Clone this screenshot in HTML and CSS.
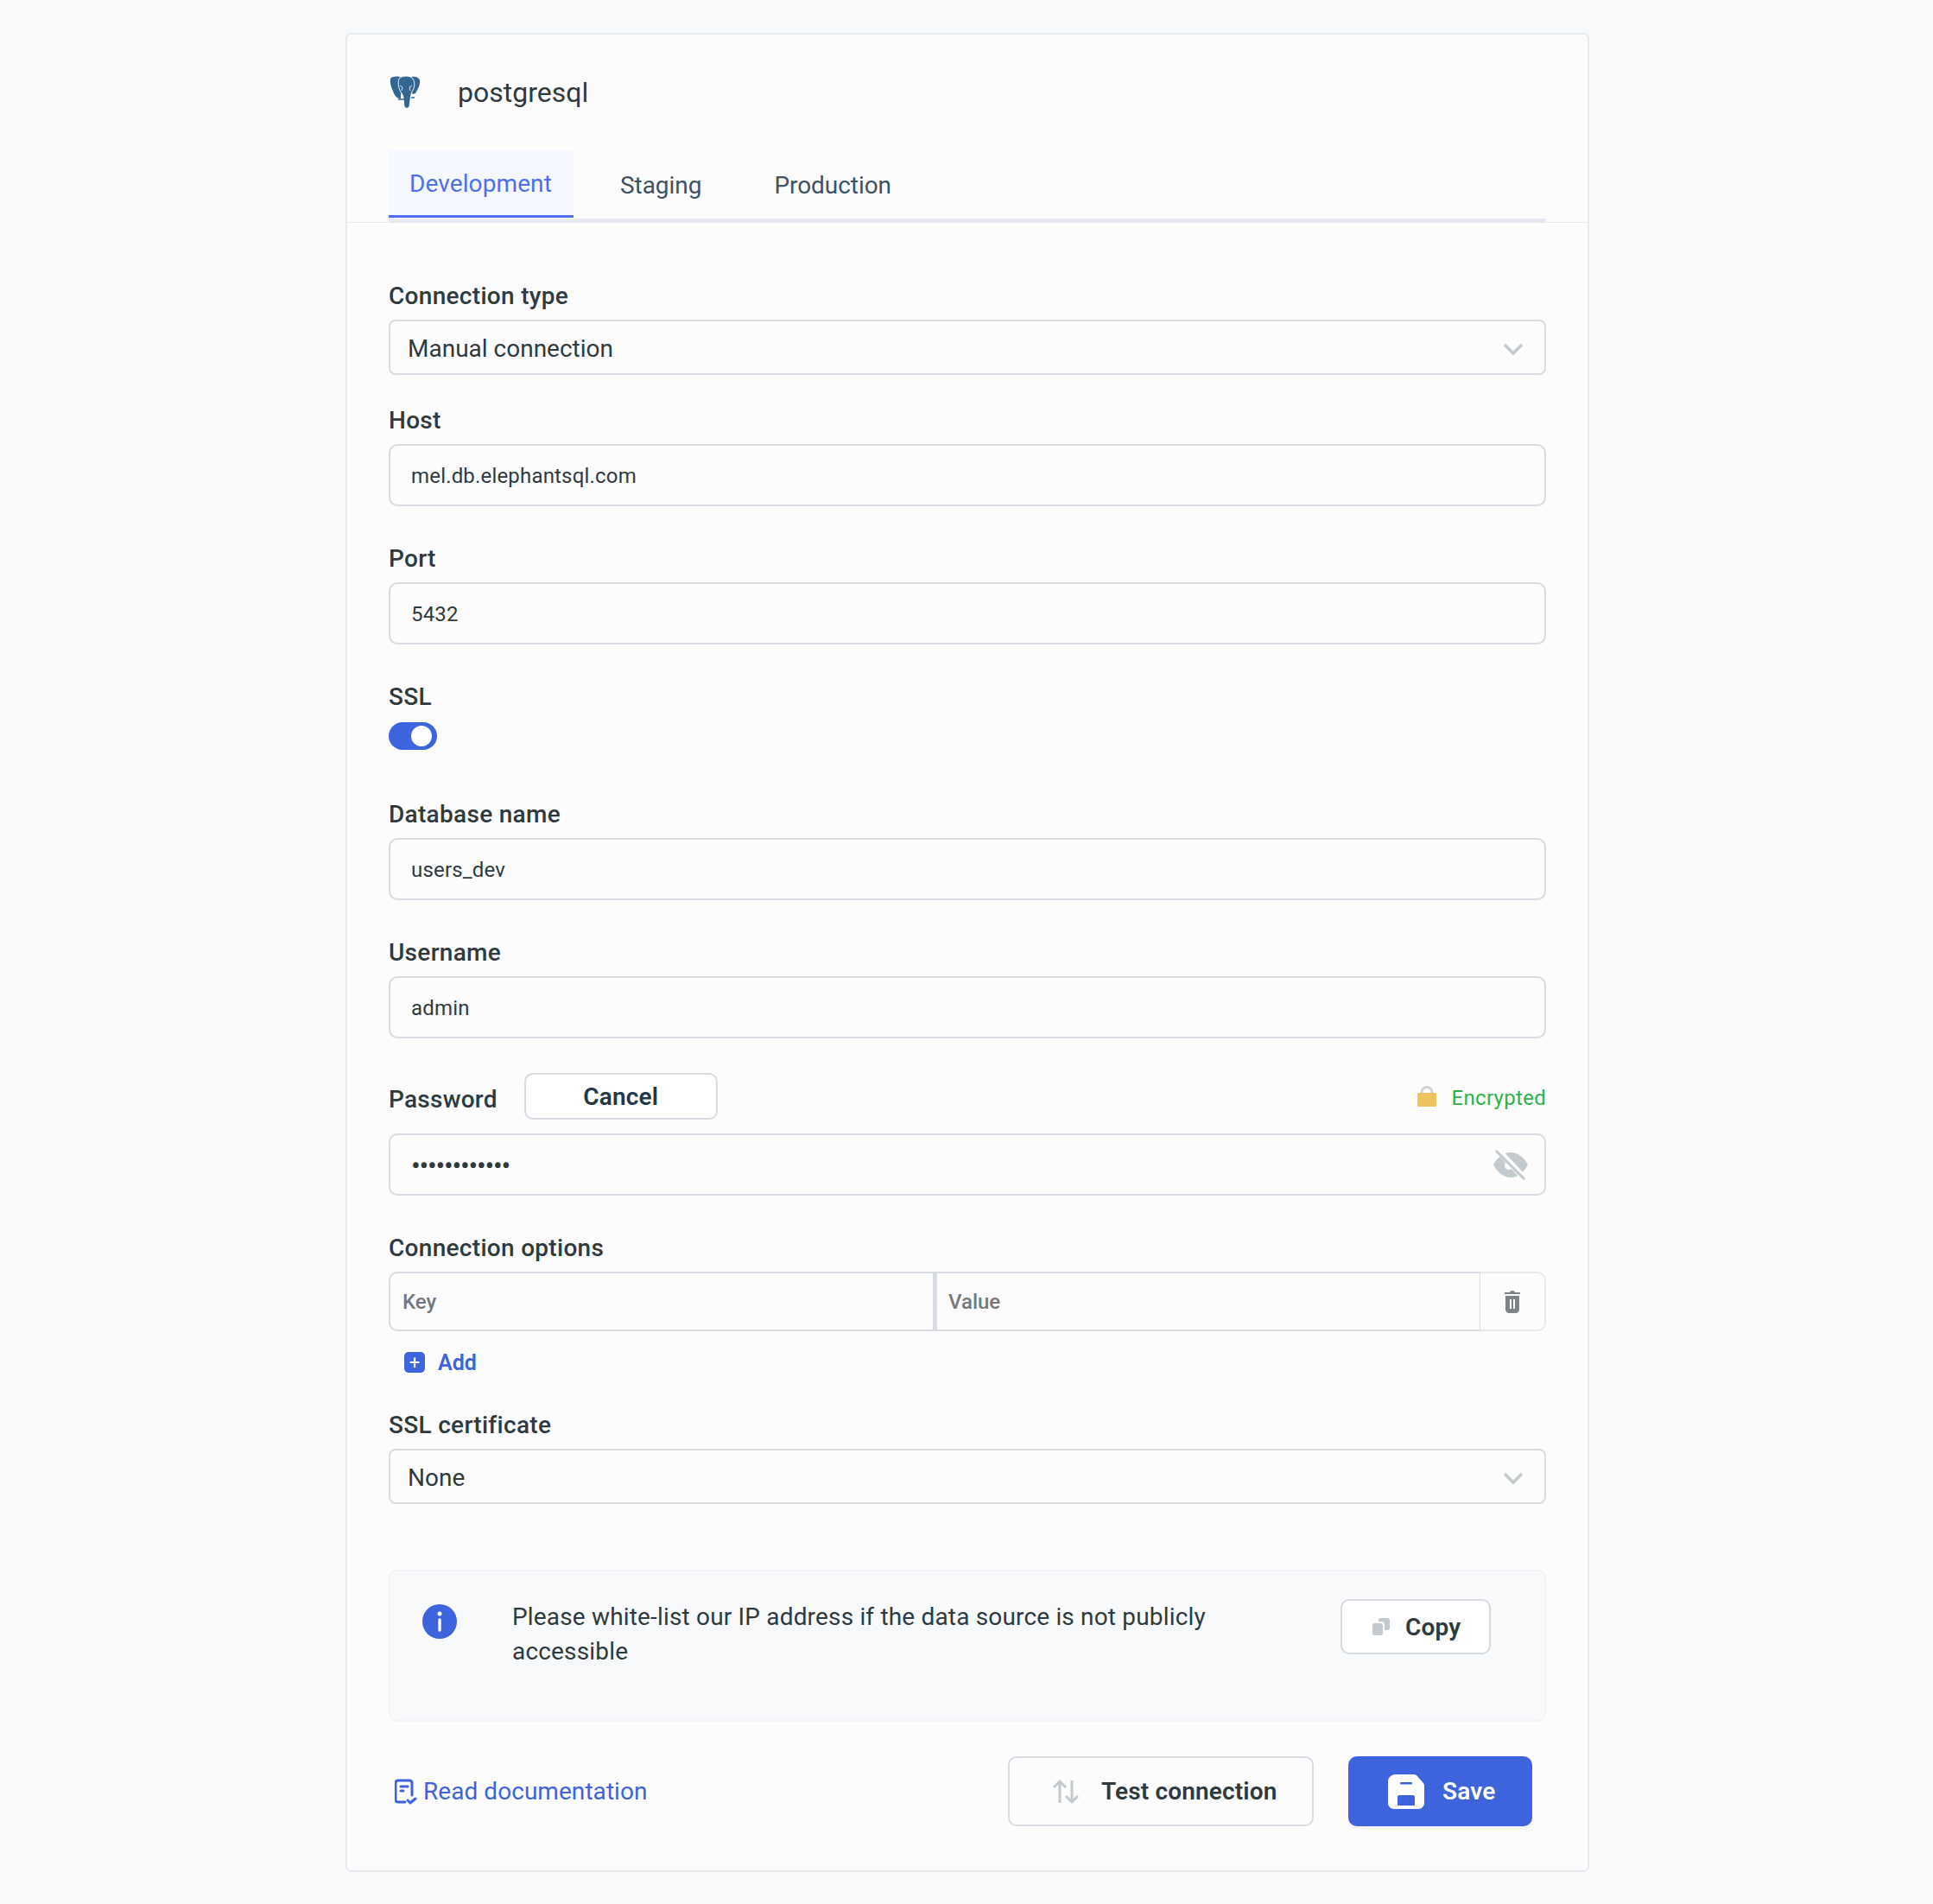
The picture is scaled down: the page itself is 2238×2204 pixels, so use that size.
FILE: index.html
```html
<!doctype html>
<html lang="en">
<head>
    <meta charset="UTF-8">
    <title>postgresql connection</title>
    <link rel="stylesheet" href="styles.css">
</head>
<body>
    <div class="card">
        <div class="card-head">
            <div class="source">
                <svg class="source-logo" viewBox="0 0 36 38">
                    <path fill="#336791" d="M1 3C4 0 10 0 14 2L13 26C9 26 7 24 5 20 3 15 0 9 1 3z"/>
                    <path fill="#336791" d="M25 1C29 0 34 1 35 5 36 9 33 15 30 20 29 21 27 21 25 20z"/>
                    <path fill="#336791" stroke="#fff" stroke-width="0.9" d="M11 3C15-1 23-1 27 3 30 8 29 14 26 18 24 22 24 30 23 35 22 38 18 38 17 35 16 30 17 24 14 20 11 16 9 9 11 3z"/>
                    <path fill="none" stroke="#fff" stroke-width="0.8" d="M12 11l3 2-1 4M26 11l-3 2 1 4"/>
                    <path fill="none" stroke="#336791" stroke-width="1.6" d="M10 27h7M25 25h4"/>
                </svg>
                <span class="source-name">postgresql</span>
            </div>
            <div class="tabs">
                <div class="tab tab-active">Development</div>
                <div class="tab">Staging</div>
                <div class="tab">Production</div>
            </div>
        </div>

        <div class="card-body">
            <div class="label label-first">Connection type</div>
            <div class="select">
                <span>Manual connection</span>
                <svg class="chevron" viewBox="0 0 24 14"><path d="M2 2l10 10L22 2"/></svg>
            </div>

            <div class="label label-host">Host</div>
            <div class="input">mel.db.elephantsql.com</div>

            <div class="label">Port</div>
            <div class="input">5432</div>

            <div class="label label-ssl">SSL</div>
            <div class="toggle"><span class="toggle-knob"></span></div>

            <div class="label label-db">Database name</div>
            <div class="input">users_dev</div>

            <div class="label">Username</div>
            <div class="input">admin</div>

            <div class="password-head">
                <span class="label-inline">Password</span>
                <button class="btn-cancel">Cancel</button>
                <span class="encrypted">
                    <svg class="lock" viewBox="0 0 22 24">
                        <path fill="none" stroke="#cfd3d6" stroke-width="3" d="M5 10V7a6 5.5 0 0 1 12 0v3"/>
                        <rect y="8" width="22" height="16" rx="1" fill="#eec35f"/>
                    </svg>
                    <span class="encrypted-text">Encrypted</span>
                </span>
            </div>
            <div class="input input-password">
                <span class="dots">••••••••••••</span>
                <svg class="eye" viewBox="0 0 40 35">
                    <path fill="#c3cacd" d="M20 3c9 0 16 7 20 14-4 8-11 15-20 15S4 25 0 17C4 10 11 3 20 3z"/>
                    <circle cx="18" cy="18" r="5" fill="#fcfcfd"/>
                    <path stroke="#fcfcfd" stroke-width="7" d="M5 0l33 35"/>
                    <path stroke="#c3cacd" stroke-width="3" d="M3 1l33 33"/>
                </svg>
            </div>

            <div class="label">Connection options</div>
            <div class="options">
                <div class="option-key">Key</div>
                <div class="option-value">Value</div>
                <div class="option-remove">
                    <svg viewBox="0 0 20 26" class="trash">
                        <path fill="#7d8488" d="M7 2c0-1 1-2 3-2s3 1 3 2h6v2H1V2zM2 6h16v16c0 2-2 4-4 4H6c-2 0-4-2-4-4z"/>
                        <path stroke="#fcfcfd" stroke-width="2" d="M8 10v11M12 10v11"/>
                    </svg>
                </div>
            </div>
            <div class="add">
                <span class="add-icon">+</span>
                <span>Add</span>
            </div>

            <div class="label label-cert">SSL certificate</div>
            <div class="select">
                <span>None</span>
                <svg class="chevron" viewBox="0 0 24 14"><path d="M2 2l10 10L22 2"/></svg>
            </div>

            <div class="notice">
                <span class="notice-icon">
                    <svg viewBox="0 0 40 40">
                        <circle cx="20" cy="20" r="20" fill="#3d63dd"/>
                        <circle cx="20" cy="11" r="2.5" fill="#fff"/>
                        <path stroke="#fff" stroke-width="3.4" stroke-linecap="round" d="M20 18v12"/>
                    </svg>
                </span>
                <p class="notice-text">Please white-list our IP address if the data source is not publicly accessible</p>
                <button class="btn btn-copy">
                    <svg class="copy-icon" viewBox="0 0 20 20">
                        <rect x="7" y="0" width="13" height="14" rx="3" fill="#c3cacd"/>
                        <rect x="0" y="4" width="14" height="16" rx="4" fill="#fcfcfd"/>
                        <rect x="0" y="6" width="12" height="14" rx="3" fill="#c3cacd"/>
                    </svg>
                    Copy
                </button>
            </div>

            <div class="footer">
                <a class="doc-link">
                    <svg class="doc-icon" viewBox="0 0 26 30">
                        <path fill="none" stroke="#3d63dd" stroke-width="3" stroke-linecap="round" stroke-linejoin="round" d="M12 27H4c-2 0-3-1-3-3V5c0-2 1-3 3-3h13c2 0 3 1 3 3v14M7 9h8M7 14h3M15 25l3 3 6-5"/>
                    </svg>
                    Read documentation
                </a>
                <div class="footer-actions">
                    <button class="btn btn-test">
                        <svg class="test-icon" viewBox="0 0 32 30">
                            <path fill="none" stroke="#c3cacd" stroke-width="3" d="M9 28V3M2 10l7-7 7 7M23 2v25M16 20l7 7 7-7"/>
                        </svg>
                        Test connection
                    </button>
                    <button class="btn btn-save">
                        <svg class="save-icon" viewBox="0 0 42 40">
                            <path fill="#fff" d="M8 0h22c2 0 3 1 4 2l6 7c1 1 2 2 2 4v20c0 4-3 7-7 7H7c-4 0-7-3-7-7V8c0-4 4-8 8-8z"/>
                            <rect x="14" y="9" width="14" height="2.5" rx="1" fill="#3d63dd"/>
                            <path fill="#3d63dd" d="M11 26c0-1 1-2 2-2h16c1 0 2 1 2 2v10H11z"/>
                        </svg>
                        Save
                    </button>
                </div>
            </div>
        </div>
    </div>
</body>
</html>
```

FILE: styles.css
```css
* {
    box-sizing: border-box;
}
body {
    margin: 0;
    padding: 38px 0 38px 2px;
    background-color: #f8f9fb;
    font-family: 'Roboto', sans-serif;
    color: #2f3a3f;
}
.card {
    width: 1440px;
    margin: 0 auto;
    background-color: #fcfcfd;
    border: 2px solid #e6e9ee;
    border-radius: 6px;
}
.card-head {
    padding: 48px 48px 0;
    border-bottom: 1px solid #e6e9ee;
}
.source {
    display: flex;
    align-items: center;
    height: 38px;
}
.source-logo {
    width: 36px;
    height: 38px;
    margin-left: 1px;
}
.source-name {
    margin-left: 43px;
    font-size: 32px;
    color: #2f3a3f;
}
.tabs {
    display: flex;
    margin-top: 48px;
    height: 83px;
    border-bottom: 4px solid #e6e9ef;
}
.tab {
    padding: 24px 24px 0;
    margin-right: 36px;
    font-size: 28px;
    letter-spacing: -0.05px;
    color: #3f5261;
}
.tab-active {
    width: 214px;
    height: 78px;
    margin-right: 30px;
    padding-top: 22px;
    background-color: #f5f8fe;
    border-bottom: 3px solid #4b6ff0;
    letter-spacing: 0.1px;
    color: #4b6ff0;
}
.card-body {
    padding: 0 48px 51px;
}
.label {
    height: 34px;
    margin-top: 44px;
    margin-bottom: 10px;
    font-size: 28px;
    font-weight: 500;
    line-height: 34px;
    letter-spacing: 0.3px;
    color: #2f3a3f;
}
.label-first {
    margin-top: 68px;
}
.label-host {
    margin-top: 36px;
}
.label-ssl {
    margin-bottom: 12px;
}
.label-db {
    margin-top: 58px;
}
.label-cert {
    margin-top: 41px;
}
.select {
    display: flex;
    align-items: center;
    justify-content: space-between;
    height: 64px;
    padding: 3px 24px 0 20px;
    border: 2px solid #d8dbe1;
    border-radius: 8px;
    font-size: 28px;
}
.chevron {
    width: 24px;
    height: 14px;
    fill: none;
    stroke: #c3cacd;
    stroke-width: 3.6;
}
.input {
    display: flex;
    align-items: center;
    height: 72px;
    padding: 1px 24px 0;
    border: 2px solid #d8dbe1;
    border-radius: 10px;
    font-size: 24px;
    letter-spacing: 0.18px;
}
.input-password {
    justify-content: space-between;
    padding-right: 19px;
}
.dots {
    font-size: 32px;
    letter-spacing: -1.3px;
}
.eye {
    width: 40px;
    height: 35px;
}
.toggle {
    display: flex;
    align-items: center;
    justify-content: flex-end;
    width: 56px;
    height: 32px;
    padding-right: 6px;
    background-color: #3d63dd;
    border-radius: 16px;
}
.toggle-knob {
    width: 24px;
    height: 24px;
    background-color: #fff;
    border-radius: 50%;
}
.password-head {
    display: flex;
    align-items: center;
    height: 54px;
    margin-top: 40px;
    margin-bottom: 16px;
}
.label-inline {
    margin-top: 6px;
    font-size: 28px;
    font-weight: 500;
    letter-spacing: 0.25px;
}
.btn-cancel {
    width: 224px;
    height: 54px;
    margin-left: 31px;
    background-color: #fff;
    border: 2px solid #d8dbe1;
    border-radius: 10px;
    font-family: inherit;
    font-size: 28px;
    font-weight: 600;
    letter-spacing: 0.2px;
    color: #23384a;
}
.encrypted {
    display: flex;
    align-items: center;
    margin-left: auto;
    font-size: 24px;
    color: #2cb34a;
}
.encrypted-text {
    margin-top: 4px;
    letter-spacing: 0.3px;
}
.lock {
    width: 22px;
    height: 24px;
    margin-right: 18px;
}
.options {
    display: flex;
    height: 69px;
    font-size: 24px;
    font-weight: 500;
    color: #75797c;
}
.option-key,
.option-value {
    display: flex;
    align-items: center;
    border: 2px solid #d8dbe1;
}
.option-key {
    width: 632px;
    padding-left: 14px;
    border-radius: 10px 0 0 10px;
}
.option-value {
    width: 632px;
    padding-left: 13px;
    border-left-width: 3px;
    border-right-width: 1px;
}
.option-remove {
    display: flex;
    align-items: center;
    justify-content: center;
    flex: 1;
    border: 2px solid #e6e9ee;
    border-left: 0;
    border-radius: 0 10px 10px 0;
}
.trash {
    width: 20px;
    height: 26px;
}
.add {
    display: flex;
    align-items: center;
    height: 30px;
    margin-top: 21px;
    padding-left: 18px;
    font-size: 25px;
    font-weight: 600;
    color: #3d63dd;
}
.add-icon {
    display: flex;
    align-items: center;
    justify-content: center;
    width: 24px;
    height: 24px;
    margin-right: 15px;
    background-color: #3d63dd;
    border-radius: 5px;
    font-size: 22px;
    font-weight: 400;
    color: #fff;
}
.notice {
    display: flex;
    align-items: flex-start;
    height: 176px;
    margin-top: 76px;
    padding: 32px 62px 0 37px;
    background-color: #f8f9fb;
    border: 2px solid #f3f4f7;
    border-radius: 10px;
}
.notice-icon {
    width: 40px;
    height: 40px;
    margin-top: 6px;
}
.notice-icon svg {
    display: block;
}
.notice-text {
    width: 860px;
    margin: 1px 0 0 64px;
    font-size: 28px;
    line-height: 40px;
    letter-spacing: 0.17px;
}
.btn {
    display: flex;
    align-items: center;
    font-family: inherit;
    font-weight: 600;
    font-size: 28px;
    letter-spacing: 0.15px;
    border-radius: 10px;
}
.btn-copy {
    width: 174px;
    height: 64px;
    margin-left: auto;
    padding-left: 35px;
    background-color: #fff;
    border: 2px solid #d8dbe1;
    color: #2f3a3f;
}
.copy-icon {
    width: 20px;
    height: 20px;
    margin-right: 18px;
}
.footer {
    display: flex;
    align-items: center;
    justify-content: space-between;
    margin-top: 40px;
    padding-right: 16px;
}
.doc-link {
    display: flex;
    align-items: center;
    padding-left: 7px;
    font-size: 28px;
    letter-spacing: 0.05px;
    color: #3d63dd;
}
.doc-icon {
    width: 26px;
    height: 30px;
    margin-right: 7px;
}
.footer-actions {
    display: flex;
    gap: 40px;
}
.btn-test {
    width: 354px;
    height: 81px;
    padding-left: 49px;
    background-color: #fcfcfd;
    border: 2px solid #d8dbe1;
    color: #2f3a3f;
}
.test-icon {
    width: 32px;
    height: 30px;
    margin-right: 25px;
}
.btn-save {
    width: 213px;
    height: 81px;
    padding-left: 46px;
    background-color: #3d63dd;
    border: 0;
    box-shadow: 0 3px 3px #f1f2f6;
    color: #fff;
}
.save-icon {
    width: 42px;
    height: 40px;
    margin-right: 21px;
}
```
